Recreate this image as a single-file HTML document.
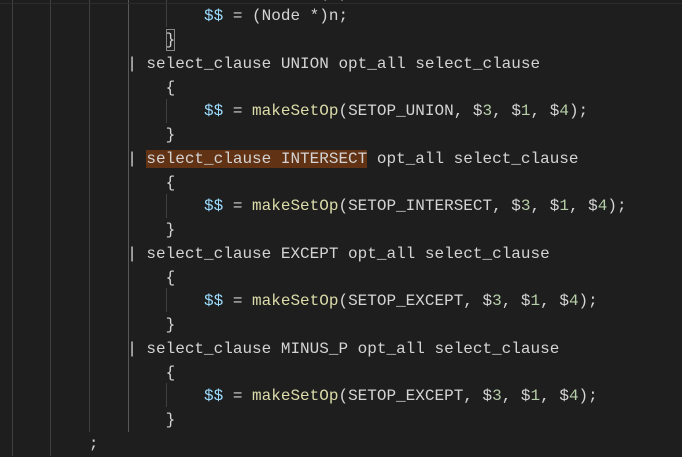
<html><head><style>
body{margin:0;width:682px;height:456px;background:#1e1e1e;overflow:hidden;position:relative;font-family:"Liberation Mono",monospace;font-size:16px;}
.c{position:absolute;left:12px;top:-18.5px;line-height:23.75px;white-space:pre;color:#d4d4d4;}
.v{color:#9cdcfe}.f{color:#dcdcaa}.n{color:#b5cea8}
.g{position:absolute;width:1px;background:#404040}
.hl{background:#613214}
</style></head><body>
<div class="g" style="left:12px;top:0;height:456px"></div>
<div class="g" style="left:50px;top:0;height:456px"></div>
<div class="g" style="left:89px;top:0;height:432px"></div>
<div class="g" style="left:128px;top:0;height:432px;background:#585858"></div>
<div class="g" style="left:166px;top:0;height:27px"></div>
<div class="g" style="left:166px;top:99px;height:24px"></div>
<div class="g" style="left:166px;top:194px;height:24px"></div>
<div class="g" style="left:166px;top:288px;height:24px"></div>
<div class="g" style="left:166px;top:383px;height:24px"></div>
<div style="position:absolute;left:0;top:3px;width:682px;height:1px;background:#2c2c2c"></div>
<div style="position:absolute;left:166px;top:29px;width:9px;height:22px;border:1px solid #888;box-sizing:border-box"></div>
<div class="c">                    SETOP_UNION (n);
                    <span class="v">$$</span> = (Node *)n;
                }
            | select_clause UNION opt_all select_clause
                {
                    <span class="v">$$</span> = <span class="f">makeSetOp</span>(SETOP_UNION, $<span class="n">3</span>, $<span class="n">1</span>, $<span class="n">4</span>);
                }
            | <span class="hl">select_clause INTERSECT</span> opt_all select_clause
                {
                    <span class="v">$$</span> = <span class="f">makeSetOp</span>(SETOP_INTERSECT, $<span class="n">3</span>, $<span class="n">1</span>, $<span class="n">4</span>);
                }
            | select_clause EXCEPT opt_all select_clause
                {
                    <span class="v">$$</span> = <span class="f">makeSetOp</span>(SETOP_EXCEPT, $<span class="n">3</span>, $<span class="n">1</span>, $<span class="n">4</span>);
                }
            | select_clause MINUS_P opt_all select_clause
                {
                    <span class="v">$$</span> = <span class="f">makeSetOp</span>(SETOP_EXCEPT, $<span class="n">3</span>, $<span class="n">1</span>, $<span class="n">4</span>);
                }
        ;
</div>
</body></html>
